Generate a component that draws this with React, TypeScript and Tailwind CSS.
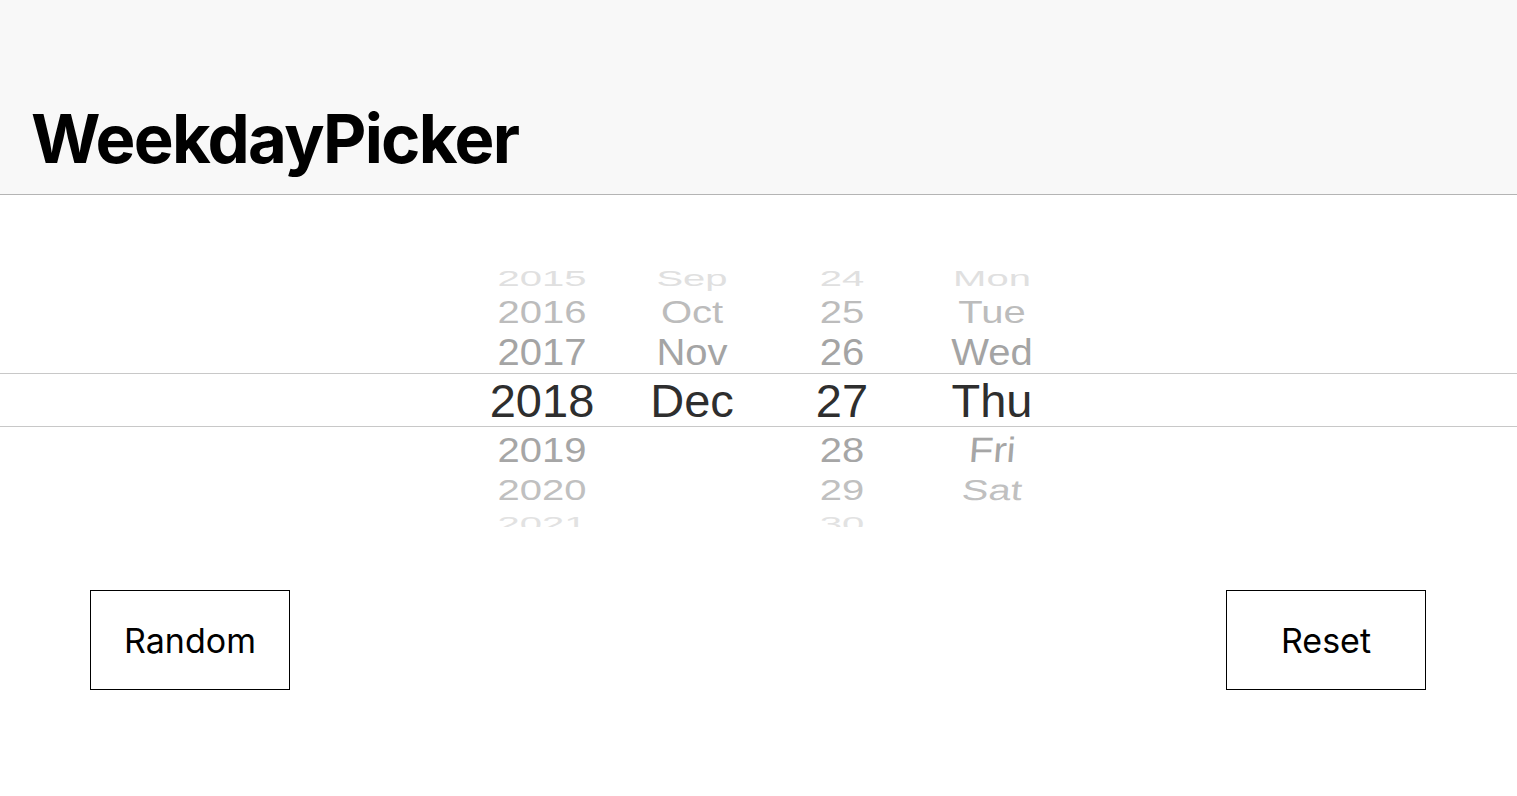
import React from 'react';

type Col = { above: string[]; sel: string; below: string[]; lean?: boolean };

const cols: Col[] = [
  { above: ['2015', '2016', '2017'], sel: '2018', below: ['2019', '2020', '2021'] },
  { above: ['Sep', 'Oct', 'Nov'], sel: 'Dec', below: ['', '', ''] },
  { above: ['24', '25', '26'], sel: '27', below: ['28', '29', '30'] },
  { above: ['Mon', 'Tue', 'Wed'], sel: 'Thu', below: ['Fri', 'Sat', ''], lean: true },
];

// farthest row first
const aboveRows = [
  { h: 'h-[32px]', s: 'scale-y-[0.55]', c: 'text-[#e0e0e0]' },
  { h: 'h-[36px]', s: 'scale-y-[0.77]', c: 'text-[#bcbcbc]' },
  { h: 'h-[43px]', s: 'scale-y-[0.93]', c: 'text-[#a4a4a4]' },
];

// nearest row first
const belowRows = [
  { h: 'h-[45px]', s: 'scale-y-[0.88]', c: 'text-[#a6a6a6]' },
  { h: 'h-[36px]', s: 'scale-y-[0.72]', c: 'text-[#c0c0c0]' },
  { h: 'h-[32px]', s: 'scale-y-[0.5]', c: 'text-[#e2e2e2]' },
];

type Row = { h: string; s: string; c: string };

const Cell = ({ text, row, lean }: { text: string; row: Row; lean?: boolean }) => (
  <div className={`${row.h} shrink-0 flex items-center justify-center`}>
    <span className={`inline-block leading-none text-[40px] ${row.s} ${row.c} ${lean ? '-skew-x-[4deg]' : ''}`}>
      {text}
    </span>
  </div>
);

const Picker = () => (
  <div className="mt-[75px] font-['Liberation_Sans',Arial,sans-serif]">
    <div className="h-[103px] overflow-hidden flex justify-center pl-[17px]">
      {cols.map((col, i) => (
        <div key={i} className="w-[150px] flex flex-col justify-end">
          {col.above.map((t, j) => (
            <Cell key={j} text={t} row={aboveRows[j]} />
          ))}
        </div>
      ))}
    </div>
    <div className="h-[54px] border-y border-[#c8c8c8] flex justify-center items-center pl-[17px]">
      {cols.map((col, i) => (
        <div key={i} className="w-[150px] flex justify-center">
          <span className="leading-none text-[47px] text-[#2e2e2e]">{col.sel}</span>
        </div>
      ))}
    </div>
    <div className="h-[100px] overflow-hidden flex justify-center pl-[17px]">
      {cols.map((col, i) => (
        <div key={i} className="w-[150px] flex flex-col justify-start">
          {col.below.map((t, j) => (
            <Cell key={j} text={t} row={belowRows[j]} lean={col.lean} />
          ))}
        </div>
      ))}
    </div>
  </div>
);

export default function App() {
  return (
    <div className="min-h-screen bg-white font-['Inter',sans-serif]">
      <header className="h-[195px] bg-[#f8f8f8] border-b border-[#b4b4b4] flex items-end pl-[31px] pb-[22px]">
        <h1 className="text-[67px] leading-none font-bold text-black tracking-[-1.7px]">WeekdayPicker</h1>
      </header>
      <Picker />
      <div className="mt-[63px] flex justify-between pl-[90px] pr-[91px]">
        <button className="w-[200px] h-[100px] border border-black text-[34px] text-black">Random</button>
        <button className="w-[200px] h-[100px] border border-black text-[34px] text-black">Reset</button>
      </div>
    </div>
  );
}
